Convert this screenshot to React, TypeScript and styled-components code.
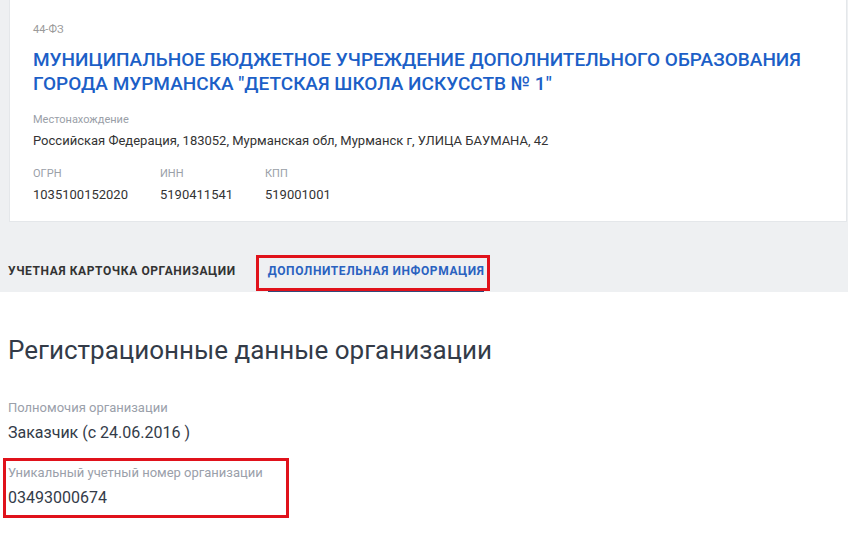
import React from "react";
import styled, { createGlobalStyle } from "styled-components";

const Global = createGlobalStyle`
  html, body { margin: 0; padding: 0; background: #ffffff; }
  body { font-family: Roboto, "Noto Sans", Arial, sans-serif; color: #333; }
  * { box-sizing: border-box; }
`;

const Page = styled.div`
  width: 848px;
  height: 535px;
  overflow: hidden;
  display: flex;
  flex-direction: column;
`;

const GrayZone = styled.div`
  background: #eef0f2;
  padding: 0 1px 0 9px;
  display: flex;
  flex-direction: column;
`;

const Card = styled.section`
  background: #ffffff;
  height: 222px;
  border: 1px solid #e4e7ea;
  border-top: none;
  padding: 22px 0 0 23px;
  display: flex;
  flex-direction: column;
`;

const Law = styled.div`
  font-size: 11px;
  color: #9a9a9a;
  line-height: 16px;
`;

const Title = styled.h1`
  margin: 10px 0 0;
  font-size: 19px;
  font-weight: 500;
  line-height: 24px;
  color: #1c5fc7;
`;

const Label = styled.div`
  font-size: 11px;
  color: #9aa0a8;
  line-height: 16px;
`;

const Value = styled.div`
  font-size: 13px;
  color: #333;
  line-height: 20px;
  margin-top: 3px;
`;

const Field = styled.div`
  margin-top: 16px;
`;

const Codes = styled.div`
  display: flex;
  margin-top: 15px;
`;

const Code = styled.div<{ $w: number }>`
  width: ${(p) => p.$w}px;
`;

const Tabs = styled.nav`
  display: flex;
  align-items: flex-end;
  height: 70px;
  margin-left: -1px;
`;

const Tab = styled.div<{ $active?: boolean }>`
  position: relative;
  font-size: 12px;
  font-weight: 700;
  letter-spacing: 0.6px;
  color: ${(p) => (p.$active ? "#2a62c0" : "#333")};
  height: 37px;
  display: flex;
  align-items: center;
  padding-bottom: 3px;
  border-bottom: 3px solid ${(p) => (p.$active ? "#33497a" : "transparent")};
  margin-right: 32px;
`;

const Highlight = styled.span<{ $inset: string }>`
  position: absolute;
  inset: ${(p) => p.$inset};
  border: 3px solid #e0121b;
  pointer-events: none;
`;

const Body = styled.main`
  padding: 41px 0 0 8px;
  display: flex;
  flex-direction: column;
  align-items: flex-start;
`;

const Heading = styled.h2`
  margin: 0;
  font-size: 26px;
  font-weight: 400;
  color: #333b48;
  line-height: 34px;
`;

const Block = styled.div<{ $mt: number }>`
  position: relative;
  margin-top: ${(p) => p.$mt}px;
`;

const BigLabel = styled.div`
  font-size: 13px;
  color: #9aa0aa;
  line-height: 18px;
`;

const BigValue = styled.div`
  font-size: 16px;
  color: #333b48;
  line-height: 22px;
  margin-top: 5px;
`;

export default function App() {
  return (
    <Page>
      <Global />
      <GrayZone>
        <Card>
          <Law>44-ФЗ</Law>
          <Title>
            МУНИЦИПАЛЬНОЕ БЮДЖЕТНОЕ УЧРЕЖДЕНИЕ ДОПОЛНИТЕЛЬНОГО ОБРАЗОВАНИЯ
            <br />
            ГОРОДА МУРМАНСКА "ДЕТСКАЯ ШКОЛА ИСКУССТВ № 1"
          </Title>
          <Field>
            <Label>Местонахождение</Label>
            <Value>Российская Федерация, 183052, Мурманская обл, Мурманск г, УЛИЦА БАУМАНА, 42</Value>
          </Field>
          <Codes>
            <Code $w={127}>
              <Label>ОГРН</Label>
              <Value>1035100152020</Value>
            </Code>
            <Code $w={105}>
              <Label>ИНН</Label>
              <Value>5190411541</Value>
            </Code>
            <Code $w={120}>
              <Label>КПП</Label>
              <Value>519001001</Value>
            </Code>
          </Codes>
        </Card>
        <Tabs>
          <Tab>УЧЕТНАЯ КАРТОЧКА ОРГАНИЗАЦИИ</Tab>
          <Tab $active>
            ДОПОЛНИТЕЛЬНАЯ ИНФОРМАЦИЯ
            <Highlight $inset="0px -6px -2px -12px" />
          </Tab>
        </Tabs>
      </GrayZone>
      <Body>
        <Heading>Регистрационные данные организации</Heading>
        <Block $mt={32}>
          <BigLabel>Полномочия организации</BigLabel>
          <BigValue>Заказчик (с 24.06.2016 )</BigValue>
        </Block>
        <Block $mt={20}>
          <BigLabel>Уникальный учетный номер организации</BigLabel>
          <BigValue>03493000674</BigValue>
          <Highlight $inset="-6px -26px -9px -5px" />
        </Block>
      </Body>
    </Page>
  );
}
